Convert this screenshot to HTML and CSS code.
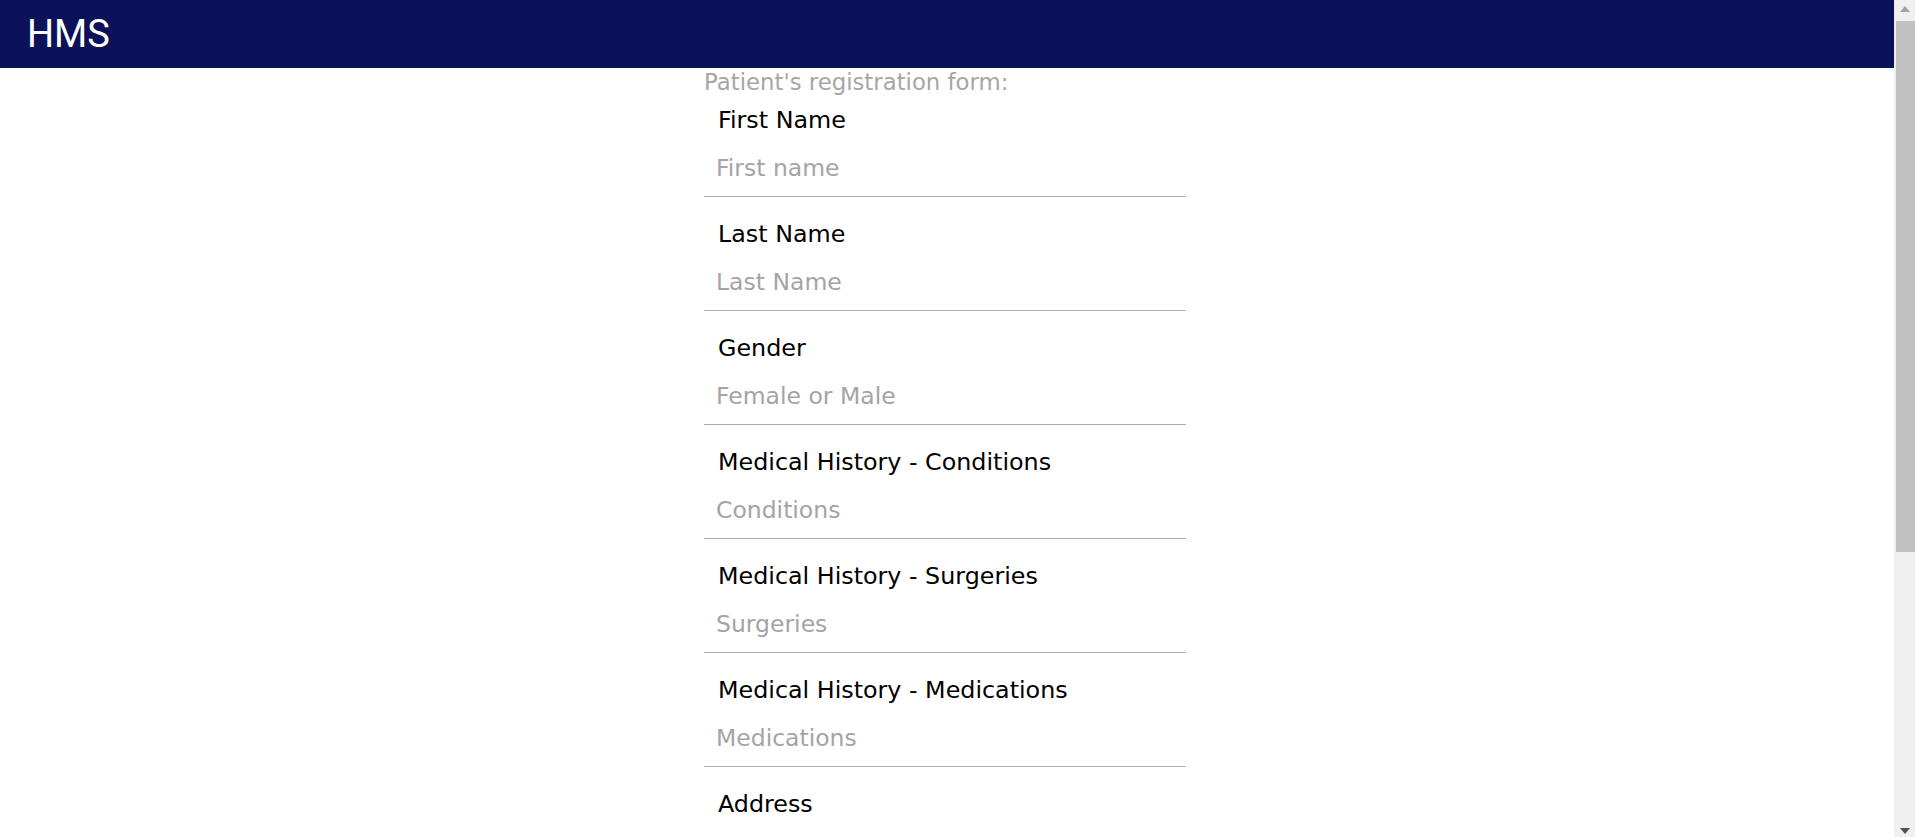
FILE: index.html
```html
<!DOCTYPE html>
<html lang="en">
<head>
<meta charset="utf-8">
<title>HMS</title>
<link rel="stylesheet" href="styles.css">
</head>
<body>
<div class="app">
  <header class="topbar">
    <h1 class="brand">HMS</h1>
  </header>
  <main class="page">
    <form class="reg-form">
      <p class="form-title">Patient's registration form:</p>
      <div class="field"><label class="field-label">First Name</label><input class="field-input" type="text" placeholder="First name"></div>
      <div class="field"><label class="field-label">Last Name</label><input class="field-input" type="text" placeholder="Last Name"></div>
      <div class="field"><label class="field-label">Gender</label><input class="field-input" type="text" placeholder="Female or Male"></div>
      <div class="field"><label class="field-label">Medical History - Conditions</label><input class="field-input" type="text" placeholder="Conditions"></div>
      <div class="field"><label class="field-label">Medical History - Surgeries</label><input class="field-input" type="text" placeholder="Surgeries"></div>
      <div class="field"><label class="field-label">Medical History - Medications</label><input class="field-input" type="text" placeholder="Medications"></div>
      <div class="field"><label class="field-label">Address</label><input class="field-input" type="text" placeholder="Address"></div>
      <div class="field"><label class="field-label">Phone Number</label><input class="field-input" type="text" placeholder="Phone number"></div>
      <div class="field"><label class="field-label">Email</label><input class="field-input" type="text" placeholder="Email"></div>
      <div class="field"><label class="field-label">Date of Birth</label><input class="field-input" type="text" placeholder="DD/MM/YYYY"></div>
      <div class="actions"><button class="submit" type="submit">Register</button></div>
    </form>
  </main>
</div>
<div class="scrollbar" aria-hidden="true">
  <div class="sb-btn sb-up"><span class="tri-up"></span></div>
  <div class="sb-track"><div class="sb-thumb"></div></div>
  <div class="sb-btn sb-down"><span class="tri-down"></span></div>
</div>
</body>
</html>
```

FILE: styles.css
```css
html, body {
  margin: 0;
  padding: 0;
  background: #ffffff;
}

body {
  font-family: "DejaVu Sans", "Liberation Sans", sans-serif;
  display: flex;
  height: 100vh;
  overflow: hidden;
}

.app {
  flex: 1;
  min-width: 0;
  height: 100vh;
  overflow: hidden;
}

.topbar {
  height: 68px;
  background: #0b1259;
  display: flex;
  align-items: center;
  padding-left: 27px;
}

.brand {
  margin: 0;
  font-family: Roboto, "Liberation Sans", sans-serif;
  font-weight: 400;
  font-size: 38px;
  line-height: 44px;
  color: #ffffff;
}

.page {
  display: flex;
  justify-content: center;
}

.reg-form {
  width: 486px;
  padding-bottom: 120px;
}

.form-title {
  margin: 0;
  font-size: 22.8px;
  line-height: 28px;
  color: #a6a6a6;
}

.field {
  width: 482px;
  display: flex;
  flex-direction: column;
  padding-top: 10px;
  margin-bottom: 13px;
}

.field-label {
  font-size: 23.8px;
  line-height: 28px;
  padding-left: 14px;
  color: #000000;
}

.field-input {
  font-family: "DejaVu Sans", "Liberation Sans", sans-serif;
  font-size: 23.5px;
  line-height: 28px;
  height: 28px;
  padding: 20px 12px 14px;
  border: none;
  border-bottom: 1px solid #ababab;
  outline: none;
  background: transparent;
  color: #000000;
}

.field-input::placeholder {
  color: #a4a4a4;
}

.actions {
  padding-top: 20px;
}

.submit {
  font-family: "DejaVu Sans", "Liberation Sans", sans-serif;
  font-size: 20px;
  padding: 10px 24px;
  border: none;
  background: #0b1259;
  color: #ffffff;
}

/* classic scrollbar column */
.scrollbar {
  width: 21px;
  flex: 0 0 21px;
  height: 100vh;
  background: #f0f0f0;
  display: flex;
  flex-direction: column;
}

.sb-btn {
  height: 21px;
  flex: 0 0 21px;
  display: flex;
  justify-content: flex-start;
  padding-left: 6px;
  box-sizing: border-box;
}

.sb-up {
  align-items: flex-start;
  padding-top: 6px;
}

.sb-down {
  align-items: flex-end;
  padding-bottom: 3px;
}

.tri-up {
  width: 0;
  height: 0;
  border-left: 5.5px solid transparent;
  border-right: 5.5px solid transparent;
  border-bottom: 6px solid #a3a3a3;
}

.tri-down {
  width: 0;
  height: 0;
  border-left: 5.5px solid transparent;
  border-right: 5.5px solid transparent;
  border-top: 6px solid #505050;
}

.sb-track {
  flex: 1;
  padding-left: 2px;
}

.sb-thumb {
  height: 531px;
  background: #c1c1c1;
}
```
